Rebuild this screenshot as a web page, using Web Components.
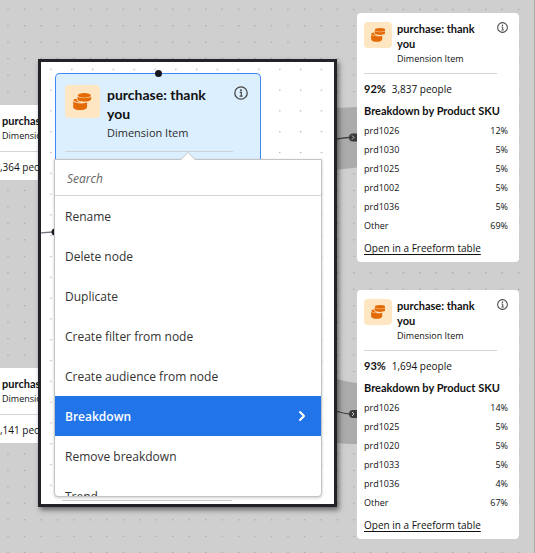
<!DOCTYPE html>
<html lang="en">
<head>
<meta charset="utf-8">
<title>Journey canvas</title>
<style>
  body {
    margin: 0;
    min-height: 100vh;
    overflow: hidden;
    font-family: "Open Sans", "Noto Sans", sans-serif;
    color: #111;
    background: #cfcfcf;
  }
</style>
</head>
<body>

<journey-canvas>
  <journey-node class="left first" name="purchase:" kind="Dimension Item" people=",364 people" compact></journey-node>
  <journey-node class="left second" name="purchase:" kind="Dimension Item" people=",141 people" compact></journey-node>

  <journey-node class="right first" name="purchase: thank you" kind="Dimension Item" percent="92%" people="3,837 people">
    <breakdown-table rows="prd1026:12%,prd1030:5%,prd1025:5%,prd1002:5%,prd1036:5%,Other:69%"></breakdown-table>
  </journey-node>
  <journey-node class="right second" name="purchase: thank you" kind="Dimension Item" percent="93%" people="1,694 people">
    <breakdown-table rows="prd1026:14%,prd1025:5%,prd1020:5%,prd1033:5%,prd1036:4%,Other:67%"></breakdown-table>
  </journey-node>

  <zoom-panel>
    <selected-node name="purchase: thank you" kind="Dimension Item"></selected-node>
    <context-menu>
      <menu-item>Rename</menu-item>
      <menu-item>Delete node</menu-item>
      <menu-item>Duplicate</menu-item>
      <menu-item>Create filter from node</menu-item>
      <menu-item>Create audience from node</menu-item>
      <menu-item active submenu>Breakdown</menu-item>
      <menu-item>Remove breakdown</menu-item>
      <menu-item>Trend</menu-item>
    </context-menu>
  </zoom-panel>
</journey-canvas>

<script>
const createTemplate = (html) => {
  const template = document.createElement('template')
  template.innerHTML = html
  return template
}

/*
canvas with the dots, the flows between nodes, and the nodes placed on it
*/
const canvasTemplate = createTemplate(`
<style>
  :host {
    display: block;
    position: relative;
    min-height: 100vh;
    overflow: hidden;
    border-right: 1px solid #a9a9a9;
    box-sizing: border-box;
  }
  .backdrop {
    position: absolute;
    top: 0;
    left: 0;
    width: 100%;
    height: 100%;
  }
  ::slotted(journey-node) { position: absolute; }
  ::slotted(.left) { left: 0; width: 60px; }
  ::slotted(.left.first) { top: 105px; }
  ::slotted(.left.second) { top: 368px; }
  ::slotted(.right) { left: 357px; width: 162px; }
  ::slotted(.right.first) { top: 13px; }
  ::slotted(.right.second) { top: 290px; }
  ::slotted(zoom-panel) { position: absolute; top: 59px; left: 38px; width: 299px; }
</style>
<svg class="backdrop" aria-hidden="true">
  <defs>
    <pattern id="dots" x="7.4" y="8.7" width="16.47" height="16.47" patternUnits="userSpaceOnUse">
      <rect width="1.3" height="1.1" fill="#a0a0a0"/>
    </pattern>
  </defs>
  <path d="M325 108.5 L357 107 V167.500 L325 171Z" fill="#ababab"/>
  <path d="M325 374 Q342 382 357 383 V444 Q344 444 325 442Z" fill="#ababab"/>
  <rect width="100%" height="100%" fill="url(#dots)"/>
  <g fill="none" stroke="#444" stroke-width="1.3">
    <path d="M330 140 Q342 138 350 137.500"/>
    <path d="M330 409 Q342 413.500 350 414"/>
  </g>
  <g fill="#3a3a3a">
    <path d="M353 133.500 H358 V141.500 H353 A4 4 0 0 1 353 133.500Z"/>
    <path d="M353 410 H358 V418 H353 A4 4 0 0 1 353 410Z"/>
  </g>
  <g fill="none" stroke="#ccc" stroke-width="1">
    <path d="M352 135.500 L354 137.500 L352 139.500"/>
    <path d="M352 412 L354 414 L352 416"/>
  </g>
</svg>
<slot></slot>
`)

class JourneyCanvas extends HTMLElement {
  constructor() {
    super()
    this.attachShadow({ mode: 'open' })
    this.shadowRoot.appendChild(canvasTemplate.content.cloneNode(true))
  }
}

/*
icon tile of a dimension: two stacked coins
*/
const dimensionIconTemplate = createTemplate(`
<style>
  :host {
    display: flex;
    flex: none;
    align-items: center;
    justify-content: center;
    width: 28px;
    height: 26px;
    border-radius: 4px;
    background: #ffe6c3;
  }
  svg { width: 52%; }
</style>
<svg viewBox="0 0 18 17" aria-hidden="true">
  <g fill="#e46a06">
    <ellipse cx="11.200" cy="2.300" rx="6.500" ry="2.300"/>
    <path d="M4.400 3.500 C6.500 5.700 15.900 5.700 18 3.500 V6 C18 9.500 4.400 9.500 4.400 6Z"/>
    <path d="M0.200 8.200 C2 10.600 11.500 10.900 13.900 9.200 V13.800 C13.900 18 0.200 18 0.200 13.800Z"/>
    <path d="M0.300 7 C0.300 6.300 1.800 5.700 3.500 5.600 C3.500 7.500 5 8.700 8 9.100 C4.500 9.500 0.600 8.600 0.300 7Z"/>
  </g>
</svg>
`)

class DimensionIcon extends HTMLElement {
  constructor() {
    super()
    this.attachShadow({ mode: 'open' })
    this.shadowRoot.appendChild(dimensionIconTemplate.content.cloneNode(true))
  }
}

const infoTemplate = createTemplate(`
<style>
  :host { display: block; flex: none; width: 11px; height: 11px; }
  button {
    display: block;
    width: 100%;
    height: 100%;
    padding: 0;
    border: 0;
    background: none;
    cursor: pointer;
  }
  svg { display: block; }
</style>
<button aria-label="Information">
  <svg viewBox="0 0 14 14" aria-hidden="true">
    <circle cx="7" cy="7" r="6.200" fill="none" stroke="#444" stroke-width="1.300"/>
    <circle cx="7" cy="4.200" r="1" fill="#444"/>
    <path d="M5.700 6.400 H7.300 V10 M5.600 10.200 H8.600" fill="none" stroke="#444" stroke-width="1.200"/>
  </svg>
</button>
`)

class InfoButton extends HTMLElement {
  constructor() {
    super()
    this.attachShadow({ mode: 'open' })
    this.shadowRoot.appendChild(infoTemplate.content.cloneNode(true))
  }
}

/*
card of a node

attributes
  - name
  - kind
  - percent
  - people
  - compact
*/
const nodeTemplate = createTemplate(`
<style>
  :host {
    display: block;
    box-sizing: border-box;
    padding: 8px 11px 6px 7px;
    border-radius: 4px;
    background: #fff;
  }
  header { display: flex; align-items: flex-start; }
  .texts { flex: 1; margin: 0 16px 0 5px; }
  h2 {
    margin: 0;
    font: bold 11px/15px Lato, sans-serif;
    color: #111;
  }
  .kind { margin: 0; font-size: 9px; line-height: 16px; }
  dimension-icon { margin-top: 1px; }
  info-button { margin-top: 1px; }
  hr {
    margin: 6px 11px 0 0;
    border: 0;
    border-top: 1px solid #d5d5d5;
  }
  .stats {
    display: flex;
    gap: 6px;
    margin: 7px 0 0;
    font-size: 10px;
    line-height: 16px;
    white-space: nowrap;
  }
  .stats b { font: bold 11px/16px Lato, sans-serif; }

  :host([compact]) { padding: 8px 0 5px; border-radius: 0; }
  :host([compact]) dimension-icon,
  :host([compact]) info-button,
  :host([compact]) b { display: none; }
  :host([compact]) .texts { margin: 0 0 0 2px; white-space: nowrap; }
  :host([compact]) hr { margin: 7px 0 0; }
</style>
<header>
  <dimension-icon></dimension-icon>
  <div class="texts">
    <h2></h2>
    <p class="kind"></p>
  </div>
  <info-button></info-button>
</header>
<hr>
<p class="stats"><b></b><span></span></p>
<slot></slot>
`)

class JourneyNode extends HTMLElement {
  constructor() {
    super()
    this.attachShadow({ mode: 'open' })
  }

  connectedCallback() {
    const template = nodeTemplate.content.cloneNode(true)

    template.querySelector('h2').textContent = this.getAttribute('name') ?? ''
    template.querySelector('.kind').textContent = this.getAttribute('kind') ?? ''
    template.querySelector('b').textContent = this.getAttribute('percent') ?? ''
    template.querySelector('.stats span').textContent = this.getAttribute('people') ?? ''

    this.shadowRoot.appendChild(template)
  }
}

/*
breakdown list of a node

attributes
  - rows: "label:value" pairs, separated by commas
*/
const breakdownTemplate = createTemplate(`
<style>
  :host { display: block; }
  table { width: 100%; border-collapse: collapse; }
  caption {
    padding: 6px 0 2px;
    font: bold 11px/16px Lato, sans-serif;
    text-align: left;
    white-space: nowrap;
    color: #111;
  }
  th, td {
    height: 19px;
    padding: 0;
    font-size: 9px;
    font-weight: normal;
    line-height: 12px;
    text-align: left;
  }
  td { text-align: right; }
  a {
    display: block;
    margin-top: 5px;
    font-size: 10px;
    line-height: 16px;
    white-space: nowrap;
    color: inherit;
    text-underline-offset: 2px;
  }
</style>
<table>
  <caption>Breakdown by Product SKU</caption>
  <tbody></tbody>
</table>
<a href="#freeform">Open in a Freeform table</a>
`)

class BreakdownTable extends HTMLElement {
  constructor() {
    super()
    this.attachShadow({ mode: 'open' })
  }

  connectedCallback() {
    const template = breakdownTemplate.content.cloneNode(true)
    const tbody = template.querySelector('tbody')

    this.getAttribute('rows').split(',').forEach((row) => {
      const [label, value] = row.split(':')
      const tr = document.createElement('tr')
      const th = document.createElement('th')
      const td = document.createElement('td')
      th.scope = 'row'
      th.textContent = label
      td.textContent = value
      tr.append(th, td)
      tbody.appendChild(tr)
    })

    this.shadowRoot.appendChild(template)
  }
}

/*
enlarged view of the canvas, over the rest
*/
const panelTemplate = createTemplate(`
<style>
  :host {
    display: block;
    box-sizing: border-box;
    border: 3px solid #222329;
    background: #fff;
    box-shadow: 2px 3px 5px rgba(0, 0, 0, .5);
  }
  .dots {
    position: absolute;
    top: 0;
    left: 0;
    width: 100%;
    height: 100%;
  }
  .content { position: relative; padding: 11px 12px 3px 13px; }
  hr {
    width: 170px;
    margin: 3px 0 0 8px;
    border: 0;
    border-top: 1px solid #ccc;
  }
</style>
<svg class="dots" aria-hidden="true">
  <defs>
    <pattern id="dots" x="9.300" y="6.700" width="20.800" height="20.800" patternUnits="userSpaceOnUse">
      <rect width="1.400" height="1.200" fill="#b0b0b0"/>
    </pattern>
  </defs>
  <rect width="100%" height="100%" fill="url(#dots)"/>
  <path d="M0 170.800 L12 170" stroke="#77777f" stroke-width="1.300"/>
  <circle cx="14" cy="170" r="3.500" fill="#1d1e26"/>
</svg>
<div class="content">
  <slot></slot>
  <hr>
</div>
`)

class ZoomPanel extends HTMLElement {
  constructor() {
    super()
    this.attachShadow({ mode: 'open' })
    this.shadowRoot.appendChild(panelTemplate.content.cloneNode(true))
  }
}

const selectedTemplate = createTemplate(`
<style>
  :host {
    display: block;
    position: relative;
    box-sizing: border-box;
    margin: 0 61px 0 1px;
    padding: 10px 12px 7px 9px;
    border: 1px solid #3f86f5;
    border-bottom: 0;
    border-radius: 5px 5px 0 0;
    background: #dbeffe;
  }
  .handle {
    position: absolute;
    top: -4px;
    left: 50%;
    width: 7px;
    height: 7px;
    margin-left: -3px;
    border-radius: 50%;
    background: #15161e;
  }
  header { display: flex; align-items: flex-start; }
  dimension-icon { width: 35px; height: 33px; margin-top: 1px; }
  info-button { width: 14px; height: 14px; margin-top: 2px; }
  .texts { flex: 1; margin: 1px 12px 0 7px; }
  h2 {
    margin: 0;
    font: bold 14px/19px Lato, sans-serif;
    color: #111;
  }
  .kind { margin: 0; font-size: 11px; line-height: 19px; color: #2c2c2c; }
  hr {
    margin: 9px 15px 0 0;
    border: 0;
    border-top: 1px solid #cdd3d8;
  }
</style>
<span class="handle"></span>
<header>
  <dimension-icon></dimension-icon>
  <div class="texts">
    <h2></h2>
    <p class="kind"></p>
  </div>
  <info-button></info-button>
</header>
<hr>
`)

class SelectedNode extends HTMLElement {
  constructor() {
    super()
    this.attachShadow({ mode: 'open' })
  }

  connectedCallback() {
    const template = selectedTemplate.content.cloneNode(true)

    template.querySelector('h2').textContent = this.getAttribute('name') ?? ''
    template.querySelector('.kind').textContent = this.getAttribute('kind') ?? ''

    this.shadowRoot.appendChild(template)
  }
}

const menuTemplate = createTemplate(`
<style>
  :host {
    display: block;
    position: relative;
    border: 1px solid #c4c4c4;
    border-radius: 0 0 4px 4px;
    background: #fff;
    box-shadow: 0 1px 3px rgba(0, 0, 0, .2);
  }
  .tip {
    position: absolute;
    top: -8px;
    left: 125px;
    width: 16px;
    height: 9px;
  }
  input {
    display: block;
    box-sizing: border-box;
    width: 100%;
    height: 36px;
    padding: 1px 12px 0;
    border: 0;
    border-bottom: 1px solid #d5d5d5;
    outline: 0;
    background: none;
    font: italic 12px "Open Sans", sans-serif;
  }
  input::placeholder { color: #666; opacity: 1; }
  .list { max-height: 300px; overflow: hidden; }
</style>
<svg class="tip" viewBox="0 0 16 9" aria-hidden="true">
  <path d="M0 8.500 L8 0.500 L16 8.500" fill="#fff" stroke="#c4c4c4"/>
  <path d="M1 9 H15" stroke="#fff"/>
</svg>
<input type="search" placeholder="Search" aria-label="Search">
<div class="list" role="menu">
  <slot></slot>
</div>
`)

class ContextMenu extends HTMLElement {
  constructor() {
    super()
    this.attachShadow({ mode: 'open' })
    this.shadowRoot.appendChild(menuTemplate.content.cloneNode(true))
  }
}

/*
attributes
  - active
  - submenu
*/
const itemTemplate = createTemplate(`
<style>
  :host { display: block; }
  button {
    display: flex;
    align-items: center;
    justify-content: space-between;
    width: 100%;
    height: 40px;
    padding: 0 15px 0 10px;
    border: 0;
    background: none;
    font: 12px "Open Sans", sans-serif;
    color: #333;
    cursor: pointer;
  }
  svg { display: none; width: 8px; height: 12px; }
  :host([active]) button { background: #2175e9; color: #fff; font-weight: 600; }
  :host([submenu]) svg { display: block; }
</style>
<button role="menuitem">
  <span><slot></slot></span>
  <svg viewBox="0 0 8 12" aria-hidden="true">
    <path d="M2 2 L6 6 L2 10" fill="none" stroke="#fff" stroke-width="2" stroke-linecap="round" stroke-linejoin="round"/>
  </svg>
</button>
`)

class MenuItem extends HTMLElement {
  constructor() {
    super()
    this.attachShadow({ mode: 'open' })
    this.shadowRoot.appendChild(itemTemplate.content.cloneNode(true))
  }
}

window.customElements.define('dimension-icon', DimensionIcon)
window.customElements.define('info-button', InfoButton)
window.customElements.define('journey-node', JourneyNode)
window.customElements.define('breakdown-table', BreakdownTable)
window.customElements.define('selected-node', SelectedNode)
window.customElements.define('menu-item', MenuItem)
window.customElements.define('context-menu', ContextMenu)
window.customElements.define('zoom-panel', ZoomPanel)
window.customElements.define('journey-canvas', JourneyCanvas)
</script>
</body>
</html>
